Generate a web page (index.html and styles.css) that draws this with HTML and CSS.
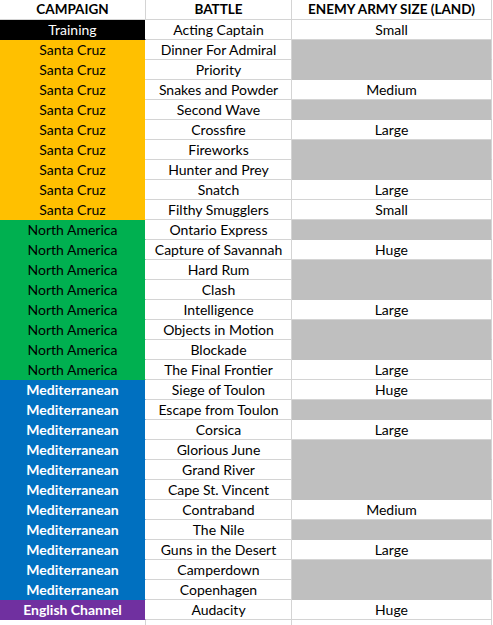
FILE: index.html
```html
<!DOCTYPE html>
<html>
<head>
<meta charset="utf-8">
<link rel="stylesheet" href="styles.css">
</head>
<body>
<div class="sheet">
  <div class="hd">CAMPAIGN</div><div class="hd">BATTLE</div><div class="hd">ENEMY ARMY SIZE (LAND)</div>

  <div class="tr">Training</div><div>Acting Captain</div><div>Small</div>
  <div class="sc">Santa Cruz</div><div>Dinner For Admiral</div><div class="g"></div>
  <div class="sc">Santa Cruz</div><div>Priority</div><div class="g"></div>
  <div class="sc">Santa Cruz</div><div>Snakes and Powder</div><div>Medium</div>
  <div class="sc">Santa Cruz</div><div>Second Wave</div><div class="g"></div>
  <div class="sc">Santa Cruz</div><div>Crossfire</div><div>Large</div>
  <div class="sc">Santa Cruz</div><div>Fireworks</div><div class="g"></div>
  <div class="sc">Santa Cruz</div><div>Hunter and Prey</div><div class="g"></div>
  <div class="sc">Santa Cruz</div><div>Snatch</div><div>Large</div>
  <div class="sc">Santa Cruz</div><div>Filthy Smugglers</div><div>Small</div>

  <div class="na">North America</div><div>Ontario Express</div><div class="g"></div>
  <div class="na">North America</div><div>Capture of Savannah</div><div>Huge</div>
  <div class="na">North America</div><div>Hard Rum</div><div class="g"></div>
  <div class="na">North America</div><div>Clash</div><div class="g"></div>
  <div class="na">North America</div><div>Intelligence</div><div>Large</div>
  <div class="na">North America</div><div>Objects in Motion</div><div class="g"></div>
  <div class="na">North America</div><div>Blockade</div><div class="g"></div>
  <div class="na">North America</div><div>The Final Frontier</div><div>Large</div>

  <div class="me">Mediterranean</div><div>Siege of Toulon</div><div>Huge</div>
  <div class="me">Mediterranean</div><div>Escape from Toulon</div><div class="g"></div>
  <div class="me">Mediterranean</div><div>Corsica</div><div>Large</div>
  <div class="me">Mediterranean</div><div>Glorious June</div><div class="g"></div>
  <div class="me">Mediterranean</div><div>Grand River</div><div class="g"></div>
  <div class="me">Mediterranean</div><div>Cape St. Vincent</div><div class="g"></div>
  <div class="me">Mediterranean</div><div>Contraband</div><div>Medium</div>
  <div class="me">Mediterranean</div><div>The Nile</div><div class="g"></div>
  <div class="me">Mediterranean</div><div>Guns in the Desert</div><div>Large</div>
  <div class="me">Mediterranean</div><div>Camperdown</div><div class="g"></div>
  <div class="me">Mediterranean</div><div>Copenhagen</div><div class="g"></div>

  <div class="ec">English Channel</div><div>Audacity</div><div>Huge</div>
  <div></div><div></div><div></div>
</div>
</body>
</html>
```

FILE: styles.css
```css
html, body {
  margin: 0;
  padding: 0;
  background: #ffffff;
}

.sheet {
  display: grid;
  grid-template-columns: 146px 146px 200px;
  grid-auto-rows: 20px;
  font-family: Lato, "Open Sans", sans-serif;
  font-size: 14px;
  color: #000000;
}

.sheet > div {
  box-sizing: border-box;
  border-right: 1px solid #d4d4d4;
  border-bottom: 1px solid #d4d4d4;
  text-align: center;
  line-height: 19px;
  white-space: nowrap;
  overflow: hidden;
}

.sheet > .hd {
  font-weight: bold;
  font-size: 13.5px;
}

.sheet > .g {
  background: #bfbfbf;
  border-bottom-color: #bfbfbf;
}

.sheet > .tr { background: #000000; color: #ffffff; border-bottom-color: #000000; border-right-color: #ffffff; }
.sheet > .sc { background: #ffc000; border-bottom-color: #ffc000; border-right-color: #ffffff; }
.sheet > .na { background: #00b050; border-bottom-color: #00b050; border-right-color: #ffffff; }
.sheet > .me { background: #0070c0; color: #ffffff; font-weight: bold; border-bottom-color: #0070c0; border-right-color: #ffffff; }
.sheet > .ec { background: #7030a0; color: #ffffff; font-weight: bold; border-bottom-color: #7030a0; border-right-color: #ffffff; }
```
